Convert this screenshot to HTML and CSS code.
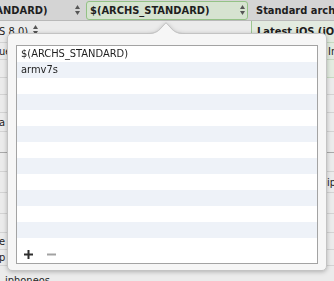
FILE: index.html
```html
<!DOCTYPE html>
<html lang="en">

<head>
    <meta charset="UTF-8">
    <title>Architectures</title>
    <link rel="stylesheet" href="styles.css">
</head>

<body>
    <div class="settings">
        <!-- header row: resolved / target / default -->
        <div class="cell head first">
            <div class="popup"><span>$(ARCHS_STANDARD)</span><svg class="stepper" width="5" height="10" viewBox="0 0 5 10"><path d="M0 4 L2.5 0 L5 4 Z M0 6 L2.5 10 L5 6 Z" /></svg></div>
        </div>
        <div class="cell head">
            <div class="popup chosen"><span>$(ARCHS_STANDARD)</span><svg class="stepper" width="5" height="10" viewBox="0 0 5 10"><path d="M0 4 L2.5 0 L5 4 Z M0 6 L2.5 10 L5 6 Z" /></svg></div>
        </div>
        <div class="cell head last"><span class="value">Standard architectures</span></div>

        <div class="cell top"><span class="tail">Latest iOS (iOS 8.0)</span><svg class="stepper" width="5" height="10" viewBox="0 0 5 10"><path d="M0 4 L2.5 0 L5 4 Z M0 6 L2.5 10 L5 6 Z" /></svg></div>
        <div class="cell"></div>
        <div class="cell pick top"><span class="value strong">Latest iOS (iOS 8.0)</span></div>

        <div class="cell"><span class="stub">ue</span></div>
        <div class="cell"></div>
        <div class="cell pick"><span class="value far">Include</span></div>

        <div class="cell"></div>
        <div class="cell"></div>
        <div class="cell pick"></div>

        <div class="cell"></div>
        <div class="cell"></div>
        <div class="cell"></div>

        <div class="cell"></div>
        <div class="cell"></div>
        <div class="cell"></div>

        <div class="cell"><span class="stub">a</span></div>
        <div class="cell"></div>
        <div class="cell"></div>

        <div class="cell dark"></div>
        <div class="cell"></div>
        <div class="cell dark"></div>

        <div class="cell"></div>
        <div class="cell"></div>
        <div class="cell"></div>

        <div class="cell"></div>
        <div class="cell"></div>
        <div class="cell"><span class="value far">iphoneos</span></div>

        <div class="cell"></div>
        <div class="cell"></div>
        <div class="cell"></div>

        <div class="cell"></div>
        <div class="cell"></div>
        <div class="cell"></div>

        <div class="cell"><span class="stub">e</span></div>
        <div class="cell"></div>
        <div class="cell"></div>

        <div class="cell"><span class="stub">p</span></div>
        <div class="cell"></div>
        <div class="cell"></div>

        <div class="cell low"><span class="value">iphoneos</span></div>
        <div class="cell"></div>
        <div class="cell"></div>
    </div>

    <!-- value list popover -->
    <div class="popover">
        <svg class="arrow" width="38" height="12" viewBox="0 0 38 12">
            <path class="arrow-fill" d="M0 12 C8 12 11 10 14 6.5 L19 1 L24 6.5 C27 10 30 12 38 12 L38 13 L0 13 Z" />
            <path class="arrow-line" d="M0 11.5 C8 11.5 11 9.5 14 6 L19 0.7 L24 6 C27 9.5 30 11.5 38 11.5" />
        </svg>
        <div class="list">
            <div class="list-rows">
                <div class="list-row">$(ARCHS_STANDARD)</div>
                <div class="list-row">armv7s</div>
                <div class="list-row"></div>
                <div class="list-row"></div>
                <div class="list-row"></div>
                <div class="list-row"></div>
                <div class="list-row"></div>
                <div class="list-row"></div>
                <div class="list-row"></div>
                <div class="list-row"></div>
                <div class="list-row"></div>
                <div class="list-row"></div>
            </div>
            <div class="list-foot">
                <svg class="add" width="9" height="9" viewBox="0 0 9 9"><path d="M0 4.5 H9 M4.5 0 V9" /></svg>
                <svg class="remove" width="9" height="9" viewBox="0 0 9 9"><path d="M0 4.5 H9" /></svg>
            </div>
        </div>
    </div>
</body>

</html>
```

FILE: styles.css
```css
* {
    box-sizing: border-box;
}

body {
    margin: 0;
    width: 334px;
    height: 281px;
    overflow: hidden;
    position: relative;
    font-family: "DejaVu Sans", sans-serif;
    font-stretch: condensed;
    font-size: 11px;
    color: #1e1e1e;
    background-color: #ebebeb;
}

/* build settings table behind the popover */
.settings {
    display: grid;
    grid-template-columns: 86px 165px 1fr;
    grid-template-rows: 21px 22px 17px 18px 17px 18px 19px 21px 19px 21px 21px 19px 17px 16px 22px;
}

.cell {
    display: flex;
    align-items: center;
    overflow: hidden;
    white-space: nowrap;
    border-bottom: 1px solid #d3d3d3;
}

.cell.dark {
    border-bottom-color: #a9a9a9;
}

.cell.top {
    align-items: flex-start;
    padding-top: 4px;
}

.cell.low {
    align-items: flex-start;
    padding-top: 8px;
}

.head {
    background-color: #d4d4d4;
    border-bottom: 1px solid #b9b9b9;
    font-weight: bold;
}

.popup {
    flex: none;
    display: flex;
    align-items: center;
    justify-content: space-between;
    width: 162px;
    height: 19px;
    padding: 0 2px 0 3px;
    border: 1px solid transparent;
    border-radius: 3px;
}

.first .popup {
    width: 159px;
    margin-left: -76px;
}

.popup.chosen {
    background-color: #d6e3d0;
    border-color: #94c286;
}

.stepper {
    fill: #555;
    flex: none;
}

.tail {
    margin-left: -69px;
    margin-right: 5px;
}

.value {
    padding-left: 5px;
}

.value.strong {
    font-weight: bold;
}

.value.far {
    padding-left: 76px;
}

.pick {
    background-color: #e3ebe0;
    border-left: 1px solid #9cc690;
    border-bottom-color: #c6d9c0;
}

.stub {
    margin-left: -1px;
}

/* popover */
.popover {
    position: absolute;
    left: 7px;
    top: 33px;
    width: 320px;
    height: 238px;
    padding: 11px 8px 0 8px;
    background-color: #f6f6f6;
    border: 1px solid #c3c3c3;
    border-radius: 5px;
    filter: drop-shadow(0 1px 2px rgba(0, 0, 0, 0.25));
}

.arrow {
    position: absolute;
    left: 139px;
    top: -12px;
}

.arrow-fill {
    fill: #f6f6f6;
}

.arrow-line {
    fill: none;
    stroke: #c3c3c3;
    stroke-width: 1;
}

.list {
    background-color: #fff;
    border: 1px solid #a3a3a3;
}

.list-row {
    height: 16px;
    line-height: 16px;
    padding-left: 4px;
}

.list-row:nth-child(even) {
    background-color: #eef2f8;
}

.list-foot {
    height: 25px;
    display: flex;
    align-items: flex-end;
    gap: 14px;
    padding: 0 0 4px 7px;
}

.add {
    stroke: #2e2e2e;
    stroke-width: 2;
}

.remove {
    stroke: #a2a2a2;
    stroke-width: 2;
}
```
